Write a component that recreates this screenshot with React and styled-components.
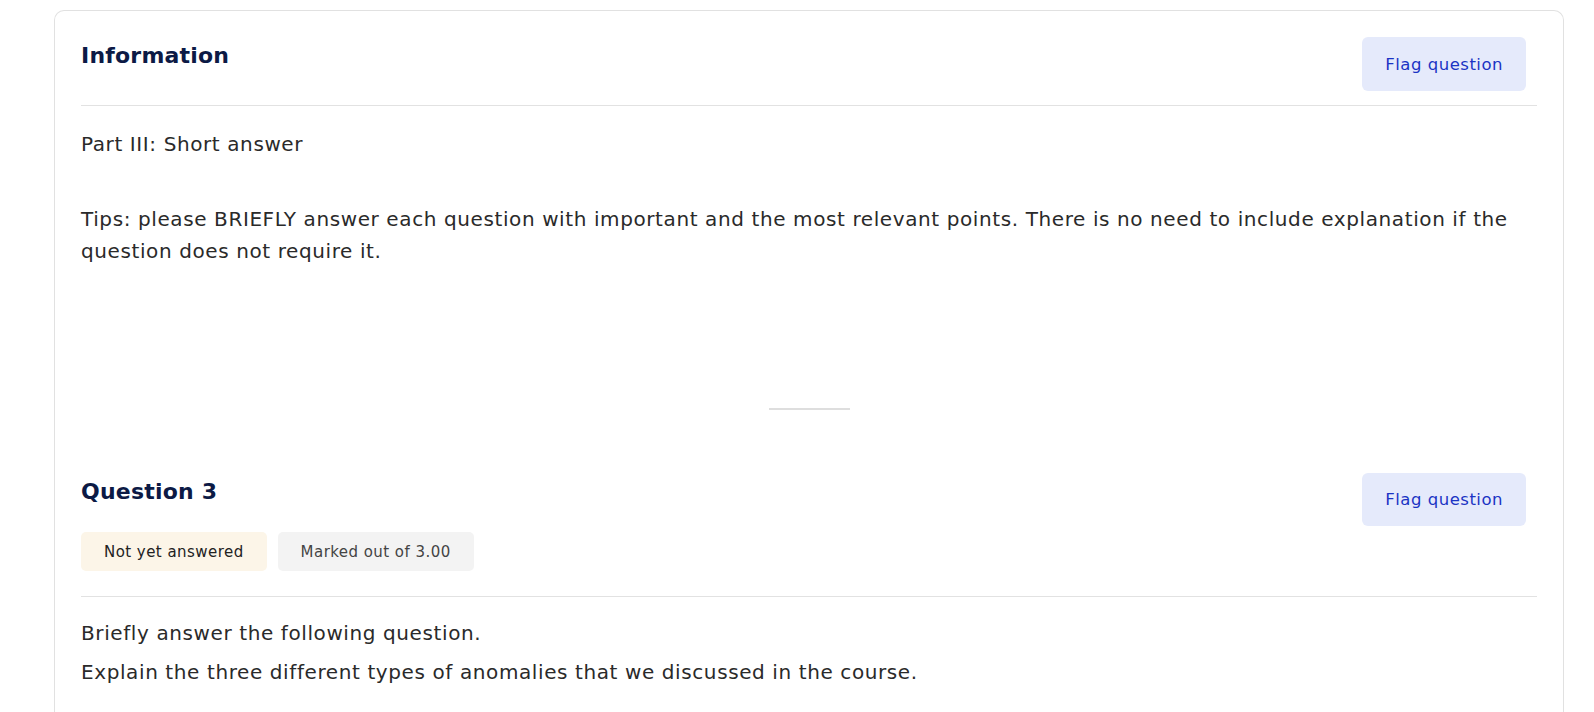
import React from "react";
import styled, { createGlobalStyle } from "styled-components";

const Global = createGlobalStyle`
  html, body { margin: 0; padding: 0; background: #ffffff; }
  body { font-family: "DejaVu Sans", "Liberation Sans", sans-serif; color: #2a2a2a; }
  * { box-sizing: border-box; }
`;

const Page = styled.div`
  padding: 10px 30px 0 54px;
  height: 712px;
  overflow: hidden;
`;

const Card = styled.div`
  border: 1px solid #e1e1e1;
  border-bottom: none;
  border-radius: 10px 10px 0 0;
  padding: 0 26px 40px 26px;
  min-height: 760px;
`;

const Header = styled.div`
  display: flex;
  justify-content: space-between;
  align-items: flex-start;
  padding: 26px 11px ${(p) => p.$bottom || 14}px 0;
  border-bottom: 1px solid #e2e2e2;
`;

const HeadLeft = styled.div`
  display: flex;
  flex-direction: column;
  gap: 25px;
`;

const Title = styled.h2`
  margin: 3px 0 0 0;
  font-size: 22px;
  letter-spacing: 0.2px;
  line-height: 31px;
  font-weight: 700;
  color: #0c1a45;
`;

const FlagButton = styled.button`
  font-family: inherit;
  font-size: 16.5px;
  letter-spacing: 0.5px;
  color: #1b34c4;
  background: #e5eafb;
  border: none;
  border-radius: 6px;
  height: ${(p) => p.$h || 54}px;
  padding: 0 23px;
  cursor: pointer;
`;

const Badges = styled.div`
  display: flex;
  gap: 11px;
`;

const Badge = styled.span`
  display: inline-flex;
  align-items: center;
  height: 39px;
  padding: 0 23px;
  border-radius: 5px;
  font-size: 15px;
  letter-spacing: 0.45px;
  color: ${(p) => (p.$tone === "warn" ? "#222" : "#444")};
  background: ${(p) => (p.$tone === "warn" ? "#fcf5e8" : "#f3f3f3")};
`;

const Content = styled.div`
  padding-top: ${(p) => p.$top || 22}px;
`;

const Para = styled.p`
  margin: 0 0 ${(p) => p.$gap || 0}px 0;
  font-size: 20px;
  letter-spacing: 0.6px;
  line-height: 32px;
  color: #2a2a2a;
`;

const Separator = styled.hr`
  width: 81px;
  height: 0;
  border: none;
  border-top: 2px solid #dedede;
  margin: 141px auto 37px auto;
`;

export default function App() {
  return (
    <>
      <Global />
      <Page>
        <Card>
          <Header>
            <Title>Information</Title>
            <FlagButton>Flag question</FlagButton>
          </Header>
          <Content>
            <Para $gap={43}>Part III: Short answer</Para>
            <Para>
              Tips: please BRIEFLY answer each question with important and the most relevant points. There is no
              need to include explanation if the question does not require it.
            </Para>
          </Content>
          <Separator />
          <Header $bottom={25}>
            <HeadLeft>
              <Title>Question 3</Title>
              <Badges>
                <Badge $tone="warn">Not yet answered</Badge>
                <Badge>Marked out of 3.00</Badge>
              </Badges>
            </HeadLeft>
            <FlagButton $h={53}>Flag question</FlagButton>
          </Header>
          <Content $top={20}>
            <Para $gap={7}>Briefly answer the following question.</Para>
            <Para>Explain the three different types of anomalies that we discussed in the course.</Para>
          </Content>
        </Card>
      </Page>
    </>
  );
}
